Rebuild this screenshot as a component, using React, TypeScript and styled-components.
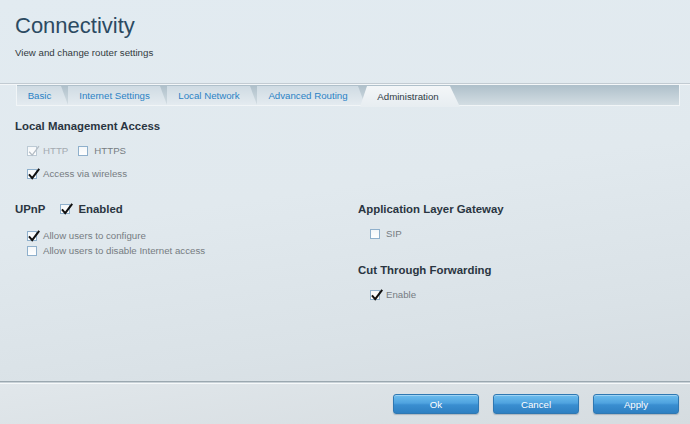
import React from "react";
import styled, { createGlobalStyle } from "styled-components";

const Global = createGlobalStyle`
  html, body { margin: 0; padding: 0; }
  body { font-family: "Liberation Sans", Arial, sans-serif; }
  * { box-sizing: border-box; }
`;

const Page = styled.div`
  width: 690px;
  height: 424px;
  display: flex;
  flex-direction: column;
  overflow: hidden;
  background: linear-gradient(172deg, #e2ebf1 0%, #e1e9ee 45%, #dae2e7 75%, #d3dadf 100%);
`;

const Header = styled.header`
  height: 83px;
  padding: 15px 15px 0;
`;

const Title = styled.h1`
  margin: 0;
  font-size: 22px;
  line-height: 22px;
  font-weight: normal;
  color: #2c4a62;
`;

const Subtitle = styled.p`
  margin: 10px 0 0;
  font-size: 9.7px;
  line-height: 12px;
  color: #333a40;
`;

const Rule = styled.div`
  height: 2px;
  border-top: 1px solid #c2cbd2;
  border-bottom: 1px solid #f4f7f9;
`;

const TabStrip = styled.nav`
  display: flex;
  margin: 0 10px 0 16px;
  height: 21px;
  background: linear-gradient(#aebfca, #d3dde3);
  border: 1px solid #f1f5f7;
  border-top: none;
`;

const Tab = styled.div<{ $w: number }>`
  width: ${(p) => p.$w}px;
  height: 19px;
  margin-top: 1px;
  padding-right: 6px;
  display: flex;
  align-items: center;
  justify-content: center;
  font-size: 9.7px;
  color: #2b82c5;
  background: linear-gradient(#cfdbe3, #e4ebf0);
  clip-path: polygon(0 0, calc(100% - 7px) 0, 100% 100%, 0 100%);
`;

const ActiveTab = styled.div<{ $w: number }>`
  position: relative;
  z-index: 1;
  width: ${(p) => p.$w}px;
  height: 21px;
  margin: 1px 0 -1px -5px;
  padding-right: 4px;
  display: flex;
  align-items: center;
  justify-content: center;
  font-size: 9.7px;
  color: #2f3a44;
  background: linear-gradient(#f3f6f8, #e7edf1);
  clip-path: polygon(7px 0, calc(100% - 10px) 0, 100% 100%, 0 100%);
`;

const Content = styled.main`
  padding: 13px 15px 0;
`;

const Heading = styled.h2`
  margin: 0;
  font-size: 11.4px;
  line-height: 14px;
  font-weight: bold;
  color: #2a3541;
`;

const Options = styled.div<{ $top: number }>`
  display: flex;
  flex-direction: column;
  margin-top: ${(p) => p.$top}px;
  padding-left: 12px;
`;

const OptionRow = styled.div<{ $top?: number }>`
  display: flex;
  align-items: center;
  gap: 10px;
  height: 15px;
  margin-top: ${(p) => p.$top ?? 0}px;
`;

const Option = styled.label<{ $disabled?: boolean }>`
  display: flex;
  align-items: center;
  gap: 6px;
  font-size: 9.7px;
  color: ${(p) => (p.$disabled ? "#a4abb1" : "#767c82")};
`;

const Box = styled.span<{ $disabled?: boolean }>`
  position: relative;
  width: 10px;
  height: 10px;
  flex: none;
  border: 1px solid ${(p) => (p.$disabled ? "#bccad5" : "#8fb0cc")};
  background: linear-gradient(#f4f7f9, #ffffff);
  svg {
    position: absolute;
    left: 0px;
    top: -2px;
  }
`;

const Columns = styled.div`
  display: grid;
  grid-template-columns: 343px 1fr;
  margin-top: 21px;
`;

const Column = styled.section`
  display: flex;
  flex-direction: column;
`;

const HeadRow = styled.div`
  display: flex;
  align-items: center;
  height: 14px;
`;

const HeadCheck = styled.div`
  display: flex;
  align-items: center;
  gap: 8px;
  margin-left: 15px;
  font-size: 11.4px;
  font-weight: bold;
  color: #2a3541;
`;

const SubHeading = styled(Heading)`
  margin-top: 22px;
`;

const Footer = styled.footer`
  margin-top: auto;
  height: 43px;
  border-top: 1px solid #9ba8b0;
  box-shadow: inset 0 1px 0 #c9d2d8, inset 0 2px 0 #f6f9fa;
  background: linear-gradient(172deg, #e1e7eb, #d5dce0);
  display: flex;
  justify-content: flex-end;
  gap: 14px;
  padding: 12px 11px 0 0;
`;

const Button = styled.button`
  width: 86px;
  height: 20px;
  padding: 0;
  border: 1px solid #2f78b2;
  border-radius: 3px;
  background: linear-gradient(#6dbdee 0%, #4fa3df 45%, #3a8ed0 55%, #2e80c2 100%);
  box-shadow: 0 1px 1px rgba(40, 60, 80, 0.25), inset 0 1px 0 rgba(255, 255, 255, 0.35);
  color: #ffffff;
  font-family: "Liberation Sans", Arial, sans-serif;
  font-size: 9.7px;
  cursor: pointer;
`;

function Check({ checked, disabled }: { checked?: boolean; disabled?: boolean }) {
  return (
    <Box $disabled={disabled}>
      {checked && (
        <svg width="12" height="12" viewBox="0 0 12 12">
          <path
            d="M1.6 7.2 L4.2 10.2 L10.6 1.6"
            fill="none"
            stroke={disabled ? "#b5bec6" : "#111"}
            strokeWidth={disabled ? 1.3 : 2}
            strokeLinecap="square"
          />
        </svg>
      )}
    </Box>
  );
}

function Item({ label, checked, disabled }: { label: string; checked?: boolean; disabled?: boolean }) {
  return (
    <Option $disabled={disabled}>
      <Check checked={checked} disabled={disabled} />
      {label}
    </Option>
  );
}

const tabs = [
  { label: "Basic", w: 51 },
  { label: "Internet Settings", w: 99 },
  { label: "Local Network", w: 90 },
  { label: "Advanced Routing", w: 108 },
];

export default function App() {
  return (
    <>
      <Global />
      <Page>
        <Header>
          <Title>Connectivity</Title>
          <Subtitle>View and change router settings</Subtitle>
        </Header>
        <Rule />
        <TabStrip>
          {tabs.map((t) => (
            <Tab key={t.label} $w={t.w}>
              {t.label}
            </Tab>
          ))}
          <ActiveTab $w={100}>Administration</ActiveTab>
        </TabStrip>
        <Content>
          <Heading>Local Management Access</Heading>
          <Options $top={10}>
            <OptionRow>
              <Item label="HTTP" checked disabled />
              <Item label="HTTPS" />
            </OptionRow>
            <OptionRow $top={8}>
              <Item label="Access via wireless" checked />
            </OptionRow>
          </Options>
          <Columns>
            <Column>
              <HeadRow>
                <Heading>UPnP</Heading>
                <HeadCheck>
                  <Check checked />
                  Enabled
                </HeadCheck>
              </HeadRow>
              <Options $top={12}>
                <OptionRow>
                  <Item label="Allow users to configure" checked />
                </OptionRow>
                <OptionRow>
                  <Item label="Allow users to disable Internet access" />
                </OptionRow>
              </Options>
            </Column>
            <Column>
              <Heading>Application Layer Gateway</Heading>
              <Options $top={10}>
                <OptionRow>
                  <Item label="SIP" />
                </OptionRow>
              </Options>
              <SubHeading>Cut Through Forwarding</SubHeading>
              <Options $top={10}>
                <OptionRow>
                  <Item label="Enable" checked />
                </OptionRow>
              </Options>
            </Column>
          </Columns>
        </Content>
        <Footer>
          <Button>Ok</Button>
          <Button>Cancel</Button>
          <Button>Apply</Button>
        </Footer>
      </Page>
    </>
  );
}
